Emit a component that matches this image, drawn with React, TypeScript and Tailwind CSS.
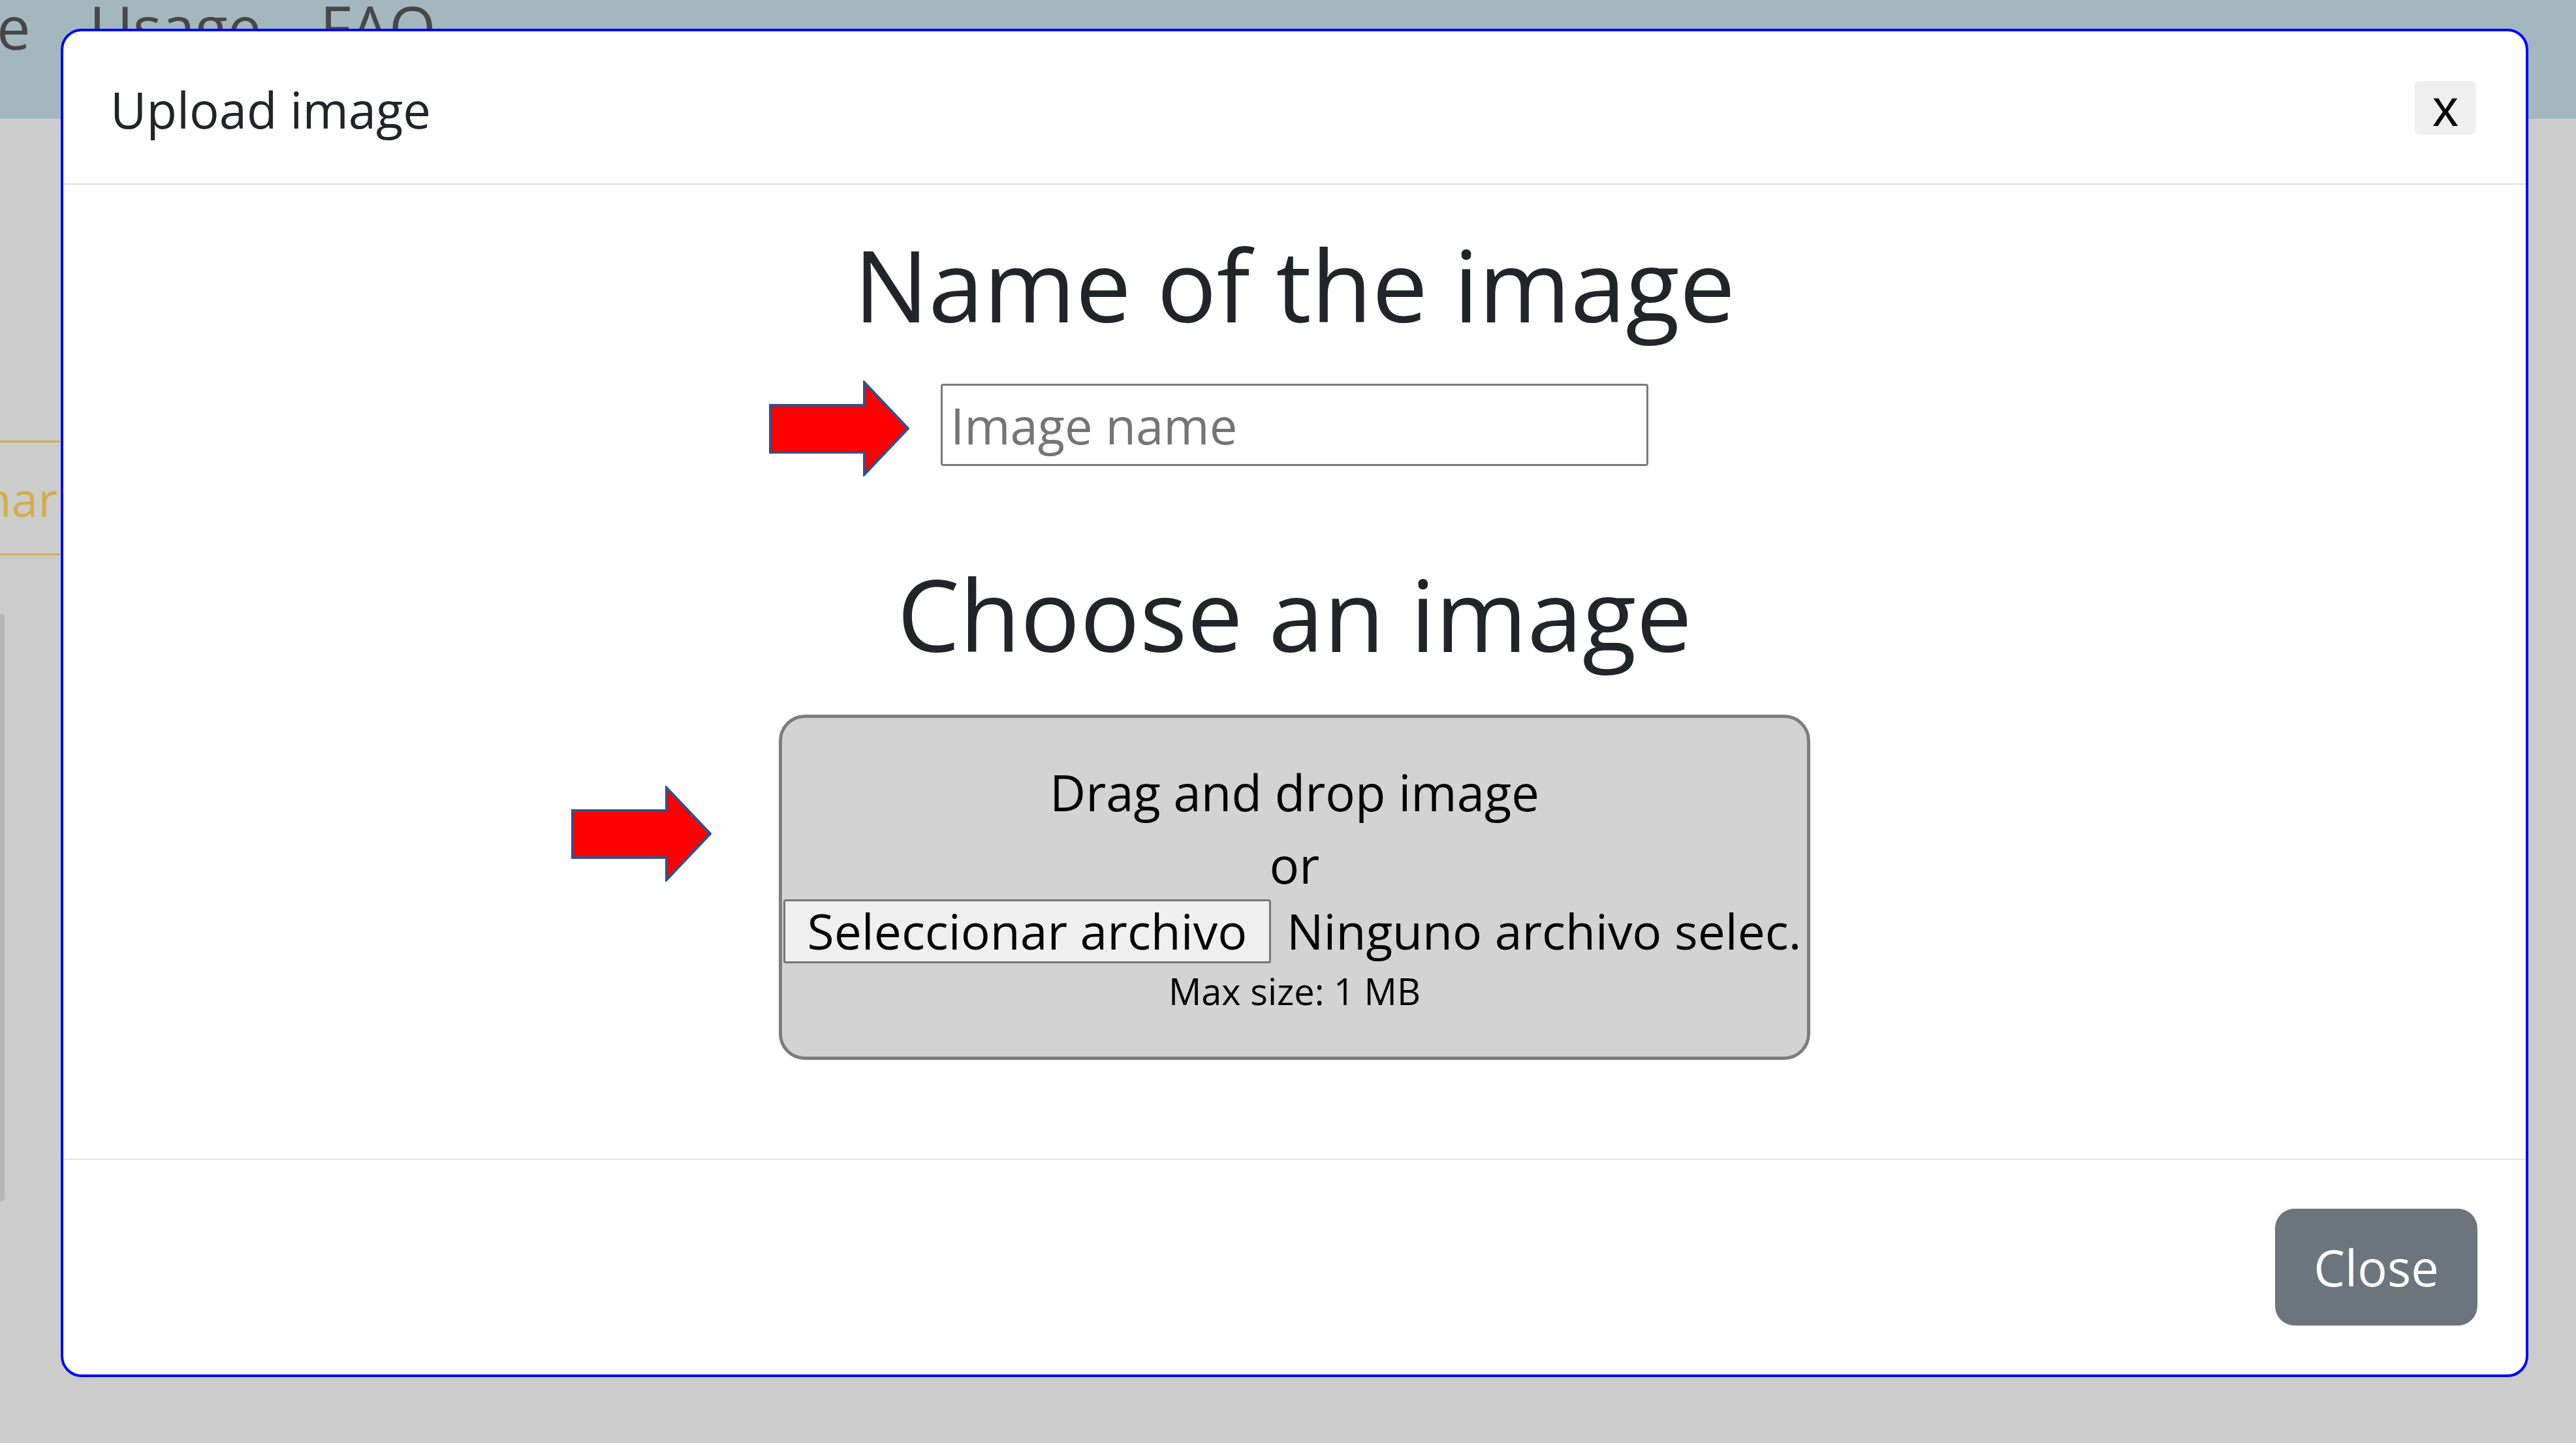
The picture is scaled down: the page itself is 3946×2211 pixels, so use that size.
import React from "react";

function Arrow() {
  return (
    <svg width="215" height="147" viewBox="0 0 215 147" className="block">
      <polygon
        points="2,38 146,38 146,3 213,73.5 146,144 146,110 2,110"
        fill="#ff0000"
        stroke="#2f528f"
        strokeWidth="4"
        strokeLinejoin="miter"
      />
    </svg>
  );
}

export default function App() {
  return (
    <div className="relative w-[3946px] h-[2211px] overflow-hidden bg-[#cccccc] font-['Open_Sans',sans-serif]">
      {/* background page: navbar */}
      <div className="h-[182px] bg-[#a2b8be] flex items-start gap-[90px] pl-0 overflow-hidden">
        <span className="-ml-[5px] -mt-[5px] text-[92px] leading-none text-[#474747]">e</span>
        <span className="-mt-[5px] text-[92px] leading-none text-[#474747]">Usage</span>
        <span className="-mt-[5px] text-[92px] leading-none text-[#474747]">FAQ</span>
      </div>

      {/* background page: outline button */}
      <div className="mt-[493px] w-[92px] h-[176px] border-y-[3px] border-[#d4ae4e] flex items-center justify-end overflow-hidden">
        <span className="whitespace-nowrap pr-[4px] text-[73px] leading-none text-[#d4ae4e]">Seleccionar</span>
      </div>

      {/* background page: panel edge */}
      <div className="mt-[89px] w-[7px] h-[901px] bg-[#b6b6b6] rounded-r-[6px]"></div>

      {/* modal */}
      <div className="absolute left-[93px] top-[44px] w-[3780px] h-[2066px] bg-white border-[4px] border-[#0000ff] rounded-[32px] flex flex-col overflow-hidden">
        {/* header */}
        <div className="h-[235px] shrink-0 border-b-[2px] border-[#dee2e6] flex items-center justify-between pl-[72px] pr-[76px] pt-[6px]">
          <h5 className="text-[76px] leading-[1.5] text-[#212529] font-normal">Upload image</h5>
          <button className="w-[94px] h-[82px] -mt-[6px] bg-[#efefef] rounded-[8px] flex items-center justify-center pt-[2px] font-['Liberation_Sans',Arial,sans-serif] text-[80px] leading-none text-black">
            x
          </button>
        </div>

        {/* body */}
        <div className="flex-1 flex flex-col items-center pt-[62px]">
          <h1 className="text-[152px] leading-[1.2] text-[#212529] font-normal">Name of the image</h1>

          <div className="relative mt-[61px]">
            <div className="absolute right-[1132px] -top-[5px]">
              <Arrow />
            </div>
            <input
              type="text"
              placeholder="Image name"
              className="w-[1084px] h-[126px] border-[3px] border-[#7a7a7a] rounded-[4px] px-[12px] text-[76px] text-[#212529] placeholder:text-[#757575] outline-none bg-white"
            />
          </div>

          <h1 className="mt-[136px] text-[152px] leading-[1.2] text-[#212529] font-normal">Choose an image</h1>

          <div className="relative mt-[62px]">
            <div className="absolute right-[1683px] top-[109px]">
              <Arrow />
            </div>
            <div className="w-[1580px] h-[529px] border-[5px] border-[#7d7d7d] rounded-[40px] bg-[#d3d3d3] flex flex-col items-center pt-[57px] text-black">
              <p className="text-[76px] leading-[114px]">Drag and drop image</p>
              <p className="-mt-[3px] text-[76px] leading-[114px]">or</p>
              <div className="-mt-[4px] w-full flex items-center gap-[24px] pl-[2px] whitespace-nowrap">
                <span className="w-[747px] h-[98px] shrink-0 bg-[#efefef] border-[3px] border-[#767676] rounded-[4px] flex items-center justify-center text-[75px] leading-none text-black">
                  Seleccionar archivo
                </span>
                <span className="text-[75px] leading-none text-black">Ninguno archivo selec.</span>
              </div>
              <p className="mt-[0px] text-[56px] leading-[84px]">Max size: 1 MB</p>
            </div>
          </div>
        </div>

        {/* footer */}
        <div className="h-[331px] shrink-0 border-t-[2px] border-[#dee2e6] flex items-center justify-end pr-[74px]">
          <button className="w-[310px] h-[179px] bg-[#6c757d] rounded-[30px] text-white text-[76px] leading-none flex items-center justify-center">
            Close
          </button>
        </div>
      </div>
    </div>
  );
}
